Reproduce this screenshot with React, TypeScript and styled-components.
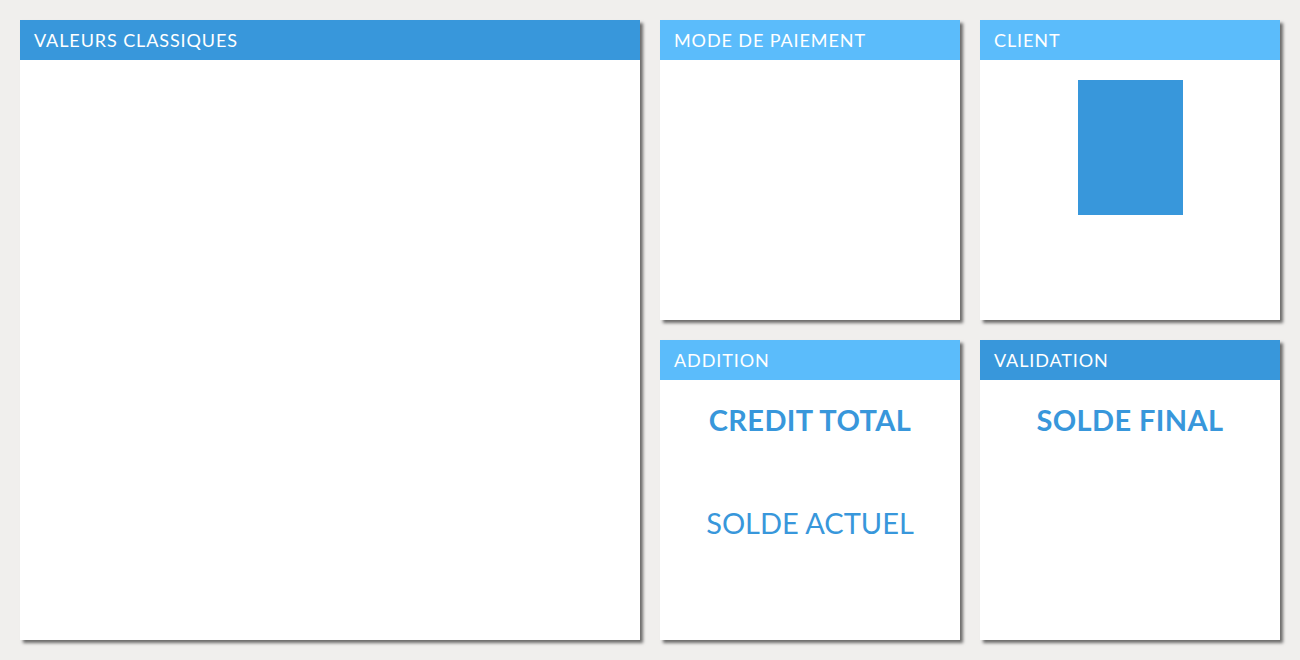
import React from "react";
import styled, { createGlobalStyle } from "styled-components";

const Global = createGlobalStyle`
  html, body { margin: 0; padding: 0; background: #f0efed; }
  body { font-family: Lato, "Open Sans", sans-serif; }
`;

const Board = styled.div`
  display: grid;
  grid-template-columns: 620px 300px 300px;
  grid-template-rows: 300px 300px;
  gap: 20px;
  padding: 20px;
`;

const Panel = styled.section<{ $tall?: boolean }>`
  background: #ffffff;
  box-shadow: 3px 3px 3px rgba(0, 0, 0, 0.55);
  display: flex;
  flex-direction: column;
  grid-row: ${(p) => (p.$tall ? "span 2" : "auto")};
`;

const Header = styled.header<{ $light?: boolean }>`
  height: 40px;
  flex: none;
  background: ${(p) => (p.$light ? "#5bbcfb" : "#3897db")};
  color: #ffffff;
  font-size: 18px;
  line-height: 41px;
  padding-left: 14px;
  letter-spacing: 0.9px;
`;

const Body = styled.div`
  flex: 1;
  display: flex;
  flex-direction: column;
  align-items: center;
  padding-top: 20px;
`;

const Figure = styled.div`
  width: 105px;
  height: 135px;
  background: #3897db;
`;

const Amount = styled.div<{ $bold?: boolean; $gap?: number }>`
  color: #3897db;
  font-size: 29px;
  font-weight: ${(p) => (p.$bold ? 700 : 400)};
  letter-spacing: ${(p) => (p.$bold ? 0.4 : 0)}px;
  line-height: 40px;
  margin-top: ${(p) => p.$gap ?? 0}px;
`;

export default function App() {
  return (
    <>
      <Global />
      <Board>
        <Panel $tall>
          <Header>VALEURS CLASSIQUES</Header>
          <Body />
        </Panel>
        <Panel>
          <Header $light>MODE DE PAIEMENT</Header>
          <Body />
        </Panel>
        <Panel>
          <Header $light>CLIENT</Header>
          <Body>
            <Figure />
          </Body>
        </Panel>
        <Panel>
          <Header $light>ADDITION</Header>
          <Body>
            <Amount $bold>CREDIT TOTAL</Amount>
            <Amount $gap={63}>SOLDE ACTUEL</Amount>
          </Body>
        </Panel>
        <Panel>
          <Header>VALIDATION</Header>
          <Body>
            <Amount $bold>SOLDE FINAL</Amount>
          </Body>
        </Panel>
      </Board>
    </>
  );
}
